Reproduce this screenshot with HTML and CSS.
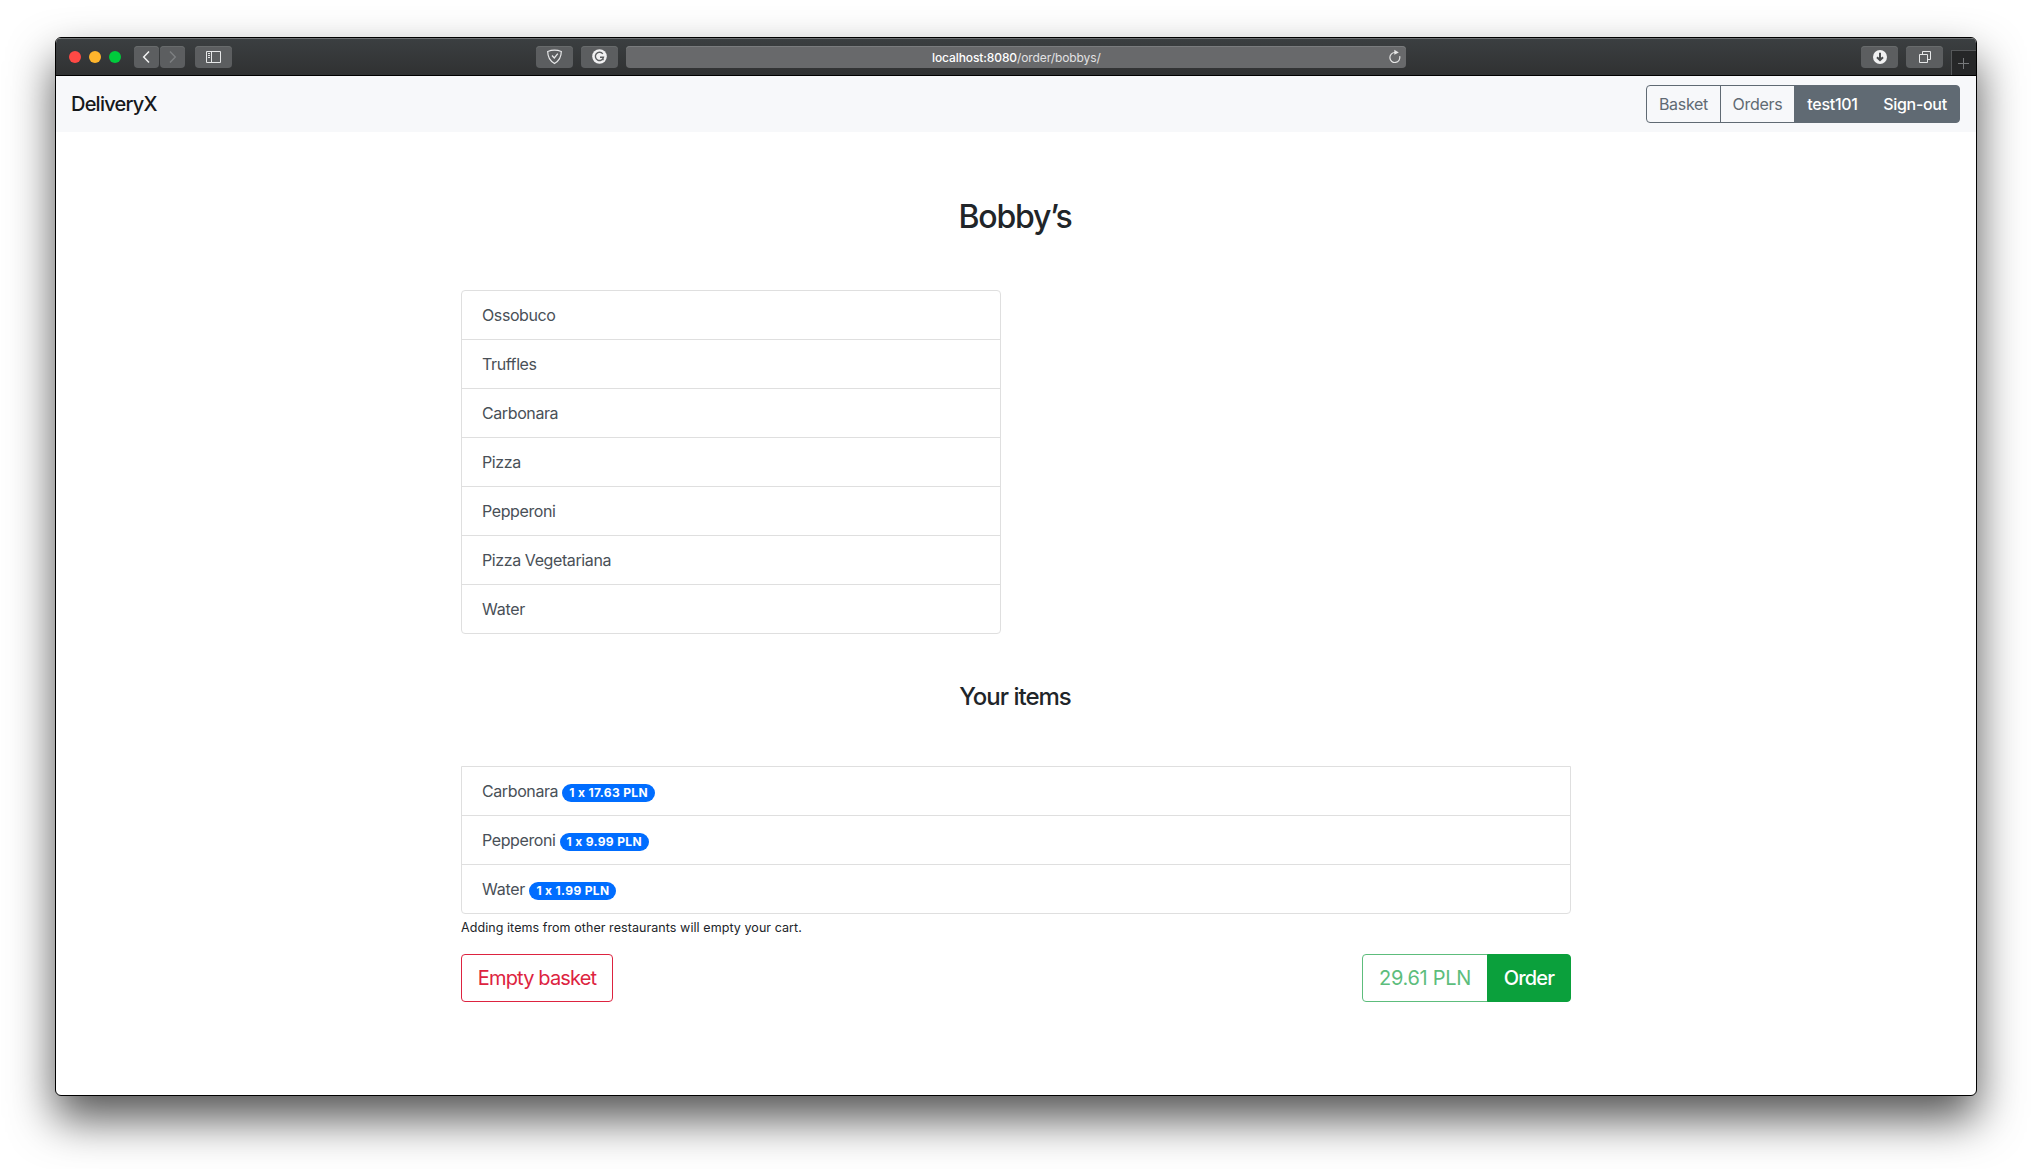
FILE: index.html
```html
<!DOCTYPE html>
<html lang="en">
<head>
<meta charset="utf-8">
<title>DeliveryX</title>
<link rel="stylesheet" href="styles.css">
</head>
<body>
<div class="window">
  <header class="toolbar">
    <div class="lights"><span class="light red"></span><span class="light yellow"></span><span class="light green"></span></div>
    <div class="history">
      <span class="tool tool-half"><svg width="25" height="22" viewBox="0 0 25 22"><path d="M15 5.500 9.700 11l5.300 5.500" fill="none" stroke="#f2f2f2" stroke-width="1.500"/></svg></span>
      <span class="tool tool-half"><svg width="25" height="22" viewBox="0 0 25 22"><path d="M10 5.500 15.300 11 10 16.500" fill="none" stroke="#7e8082" stroke-width="1.400"/></svg></span>
    </div>
    <span class="tool"><svg width="37" height="22" viewBox="0 0 37 22" fill="none" stroke="#e6e7e8"><path d="M11.500 5.500h14v11h-14zM16.500 5.500v11M13 7.500h2M13 9.500h2M13 11.500h2"/></svg></span>
    <div class="center-tools">
      <span class="tool"><svg width="37" height="22" viewBox="0 0 37 22" fill="none" stroke="#e6e7e8"><path d="M18.500 4.200c2.400 0 4.800.5 6.800 1.300 0 5.500-2 9.300-6.800 12-4.800-2.700-6.800-6.500-6.800-12 2-.8 4.400-1.300 6.800-1.300z" stroke-width="1.200"/><path d="m16 9.500 2.300 2.500 3.500-4.300" stroke-width="1.300"/></svg></span>
      <span class="tool"><svg width="37" height="22" viewBox="0 0 37 22"><circle cx="18.500" cy="10.500" r="7.300" fill="#f1f1f2"/><path d="M21.800 7.900A4.100 4.100 0 1 0 22.500 11.200H19M22 14.300v-3" fill="none" stroke="#5c5e60" stroke-width="1.400"/></svg></span>
      <div class="address">
        <span class="url"><span class="host">localhost:8080</span>/order/bobbys/</span>
        <svg class="reload" width="14" height="16" viewBox="0 0 14 16"><path d="M7 3.500A5 5 0 1 0 11.700 7.200" fill="none" stroke="#e6e6e6" stroke-width="1.200"/><path d="M6.300.8v5L10.800 3.400z" fill="#e6e6e6"/></svg>
      </div>
    </div>
    <div class="right-tools">
      <span class="tool"><svg width="37" height="22" viewBox="0 0 37 22"><circle cx="19" cy="11" r="7" fill="#f1f1f2"/><path d="M19 6.800v7M16 11.200l3 3 3-3" fill="none" stroke="#4a4c4e" stroke-width="2"/></svg></span>
      <span class="tool"><svg width="37" height="22" viewBox="0 0 37 22" fill="none" stroke="#e6e7e8"><path d="M13.500 8.500h8v8h-8zM16.500 8.500v-3h8v8h-3"/></svg></span>
      <span class="new-tab"><svg width="24" height="24" viewBox="0 0 24 24"><path d="M11.500 7v11M6 12.500h11" stroke="#77797b"/></svg></span>
    </div>
  </header>
  <nav class="navbar">
    <a class="brand">DeliveryX</a>
    <div class="btn-group">
      <a class="btn btn-outline">Basket</a>
      <a class="btn btn-outline">Orders</a>
      <a class="btn btn-solid">test101</a>
      <a class="btn btn-solid">Sign-out</a>
    </div>
  </nav>
  <main class="container">
    <h2 class="title">Bobby’s</h2>
    <ul class="list menu">
      <li>Ossobuco</li>
      <li>Truffles</li>
      <li>Carbonara</li>
      <li>Pizza</li>
      <li>Pepperoni</li>
      <li>Pizza Vegetariana</li>
      <li>Water</li>
    </ul>
    <h4 class="subtitle">Your items</h4>
    <ul class="list basket">
      <li>Carbonara <span class="badge">1 x 17.63 PLN</span></li>
      <li>Pepperoni <span class="badge">1 x 9.99 PLN</span></li>
      <li>Water <span class="badge">1 x 1.99 PLN</span></li>
    </ul>
    <small class="note">Adding items from other restaurants will empty your cart.</small>
    <div class="actions">
      <a class="btn btn-lg btn-danger">Empty basket</a>
      <div class="btn-group">
        <a class="btn btn-lg btn-price">29.61 PLN</a>
        <a class="btn btn-lg btn-order">Order</a>
      </div>
    </div>
  </main>
</div>
</body>
</html>
```
FILE: styles.css
```css
* { box-sizing: border-box; }

body {
  margin: 0;
  padding: 37px 55px 73px;
  height: 1169px;
  overflow: hidden;
  background: #fff;
  color: #212529;
  font: 400 16px/24px Inter, "Liberation Sans", sans-serif;
  font-feature-settings: "calt" 0;
}

.window {
  width: 1922px;
  height: 1059px;
  overflow: hidden;
  border: 1px solid #000;
  border-radius: 6px;
  background: #fff;
  box-shadow: 0 23px 45px rgba(0, 0, 0, .67);
}

/* Browser toolbar */
.toolbar {
  display: flex;
  align-items: center;
  height: 38px;
  padding-left: 13px;
  border-top: 1px solid #6d7072;
  border-bottom: 1px solid #000;
  background: linear-gradient(#3b3f41, #303132);
}
.lights { display: flex; gap: 8px; margin-right: 13px; }
.light { width: 12px; height: 12px; border-radius: 50%; }
.red { background: #ff4945; }
.yellow { background: #ffb52c; }
.green { background: #00cb3c; }
.history { display: flex; gap: 1px; margin-right: 10px; }
.tool {
  display: flex;
  width: 37px;
  height: 22px;
  border-radius: 4px;
  background: #5c5e60;
  box-shadow: inset 0 1px #686b6c;
}
.tool-half { width: 25px; }
.center-tools { display: flex; gap: 8px; margin-left: 304px; }
.address {
  display: flex;
  align-items: center;
  width: 780px;
  height: 22px;
  padding-right: 4px;
  border-radius: 4px;
  background: #68696b;
  box-shadow: inset 0 1px #7a7c7e;
  color: #e2e2e3;
  font-size: 12px;
  letter-spacing: -.1px;
}
.url { margin-left: 306px; padding-top: 1px; white-space: nowrap; }
.host { color: #fff; font-weight: 500; }
.reload { margin-left: auto; }
.right-tools { display: flex; gap: 8px; height: 36px; align-items: center; margin-left: auto; }
.new-tab {
  align-self: flex-end;
  display: flex;
  width: 25px;
  height: 25px;
  border: solid #555759;
  border-width: 1px 0 0 1px;
  background: #262728;
}

/* Page */
.navbar {
  display: flex;
  align-items: center;
  justify-content: space-between;
  height: 56px;
  padding: 0 16px 0 15px;
  background: #f7f8fa;
}
.brand { color: #16181b; font-size: 20px; font-weight: 500; letter-spacing: -.78px; }
.btn-group { display: flex; }
.btn {
  display: flex;
  align-items: center;
  justify-content: center;
  height: 38px;
  border: 1px solid;
  border-radius: 4px;
  white-space: nowrap;
}
.navbar .btn { width: 75px; color: #606a73; letter-spacing: -.3px; }
.navbar .btn-solid { width: 77px; background: #606a73; border-color: #606a73; color: #fff; font-weight: 500; }
.navbar .btn-solid:last-child { width: 90px; }
.btn-group .btn:not(:first-child) { margin-left: -1px; border-top-left-radius: 0; border-bottom-left-radius: 0; }
.btn-group .btn:not(:last-child) { border-top-right-radius: 0; border-bottom-right-radius: 0; }

.container { width: 1110px; margin: 0 auto; padding-top: 65px; }
.title { margin: 0; padding-right: 2px; text-align: center; font-size: 32px; line-height: 40px; font-weight: 550; letter-spacing: -1.2px; }
.list { list-style: none; margin: 0; padding: 0; border: 1px solid #dfdfdf; border-radius: 4px; }
.list li { height: 49px; padding: 12px 20px; border-bottom: 1px solid #dfdfdf; color: #495057; letter-spacing: -.4px; }
.list li:last-child { height: 48px; border-bottom: 0; letter-spacing: -.25px; }
.menu { width: 540px; margin-top: 53px; }
.subtitle { margin: 48px 0 0; padding-right: 2px; text-align: center; font-size: 24px; line-height: 29px; font-weight: 550; letter-spacing: -1px; }
.basket { margin-top: 55px; border-radius: 0 0 4px 4px; }
.list .badge {
  display: inline-block;
  padding: 3px 7px;
  border-radius: 10px;
  background: #006dff;
  color: #fff;
  font-size: 12px;
  line-height: 12px;
  font-weight: 700;
  letter-spacing: .34px;
}
.note { display: block; padding-top: 2px; font-size: 12.5px; line-height: 24px; letter-spacing: .07px; }
.actions { display: flex; justify-content: space-between; margin-top: 14px; }
.btn-lg { height: 48px; font-size: 20px; }
.btn-danger { width: 152px; color: #dd2340; letter-spacing: -.85px; }
.btn-price { width: 126px; color: #5dbd7c; letter-spacing: -.3px; }
.actions .btn-order { width: 84px; background: #0ba03c; border-color: #0ba03c; color: #fff; font-weight: 500; letter-spacing: -.8px; }
```
